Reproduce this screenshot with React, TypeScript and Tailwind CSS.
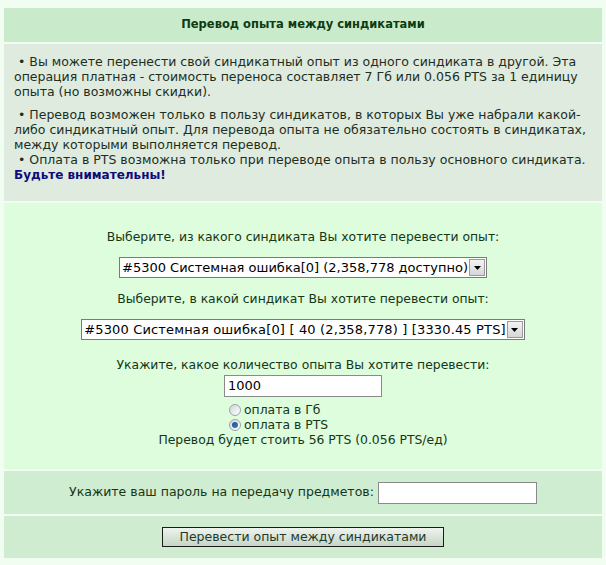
import React from "react";

const font = { fontFamily: "Verdana, 'DejaVu Sans', sans-serif" };

function Arrow() {
  return (
    <div className="flex h-[17px] w-[16px] items-center justify-center border border-[#9a9a9a] bg-gradient-to-b from-[#f4f4f4] to-[#d6d6d6]">
      <svg width="7" height="4" viewBox="0 0 7 4">
        <path d="M0 0h7L3.5 4z" fill="#000" />
      </svg>
    </div>
  );
}

function FakeSelect({ text, extra }: { text: string; extra?: string }) {
  return (
    <div className="flex h-[21px] items-center gap-[1px] border border-[#7a7a7a] bg-white pl-[2px] pr-[1px]">
      <span className={`whitespace-nowrap text-[13px] text-black ${extra ?? ""}`}>{text}</span>
      <Arrow />
    </div>
  );
}

function Radio({ checked }: { checked?: boolean }) {
  return (
    <span className="flex h-[12px] w-[12px] items-center justify-center rounded-full border border-[#9aa3ad] bg-gradient-to-br from-[#d2d6da] to-[#ffffff]">
      {checked && <span className="h-[6px] w-[6px] rounded-full bg-gradient-to-br from-[#1f4f8a] to-[#3d7cc4]" />}
    </span>
  );
}

export default function App() {
  return (
    <div className="min-h-[565px] w-[606px] bg-[#f0fdf0] pt-[8px]" style={font}>
      <div className="mx-[4px] flex w-[598px] flex-col gap-[2px]">
        {/* title */}
        <div className="flex h-[34px] items-center justify-center bg-[#c9ebcc] text-[11.5px] font-bold text-[#0f3b12]">
          Перевод опыта между синдикатами
        </div>

        {/* notes */}
        <div className="h-[157px] bg-[#dfebdf] px-[10px] pt-[10px] text-[12.5px] leading-[15px] text-[#1d2e1d]">
          <div className="whitespace-nowrap">
            &nbsp;• Вы можете перенести свой синдикатный опыт из одного синдиката в другой. Эта
            <br />
            операция платная - стоимость переноса составляет 7 Гб или 0.056 PTS за 1 единицу
            <br />
            опыта (но возможны скидки).
          </div>
          <div className="mt-[8px] whitespace-nowrap">
            &nbsp;• Перевод возможен только в пользу синдикатов, в которых Вы уже набрали какой-
            <br />
            либо синдикатный опыт. Для перевода опыта не обязательно состоять в синдикатах,
            <br />
            между которыми выполняется перевод.
            <br />
            &nbsp;• Оплата в PTS возможна только при переводе опыта в пользу основного синдиката.
            <br />
            <b className="text-[12px] text-[#0c0c7a]">Будьте внимательны!</b>
          </div>
        </div>

        {/* form */}
        <div className="flex h-[266px] flex-col items-center bg-[#ddfddd] pt-[26px] text-[12.4px] leading-[16px] text-[#163616]">
          <div>Выберите, из какого синдиката Вы хотите перевести опыт:</div>
          <div className="mt-[12px]">
            <FakeSelect text="#5300 Системная ошибка[0] (2,358,778 доступно)" />
          </div>
          <div className="mt-[13px]">Выберите, в какой синдикат Вы хотите перевести опыт:</div>
          <div className="mt-[12px]">
            <FakeSelect text="#5300 Системная ошибка[0] [ 40 (2,358,778) ] [3330.45 PTS]" extra="tracking-[0.15px]" />
          </div>
          <div className="mt-[17px]">Укажите, какое количество опыта Вы хотите перевести:</div>
          <div className="mt-[2px] flex h-[22px] w-[158px] items-center border border-[#8a8a8a] bg-white px-[3px] text-[13px] text-black">
            1000
          </div>
          <div className="mt-[5px] flex w-[158px] flex-col leading-[15px]">
            <div className="flex items-center gap-[3px] pl-[5px]">
              <Radio />
              <span>оплата в Гб</span>
            </div>
            <div className="flex items-center gap-[3px] pl-[5px]">
              <Radio checked />
              <span>оплата в PTS</span>
            </div>
          </div>
          <div className="leading-[15px]">Перевод будет стоить 56 PTS (0.056 PTS/ед)</div>
        </div>

        {/* password */}
        <div className="flex h-[43px] items-center justify-center gap-[4px] bg-[#cfedd0] text-[12.5px] text-[#163616]">
          <span>Укажите ваш пароль на передачу предметов:</span>
          <div className="h-[22px] w-[159px] border border-[#8a8a8a] bg-white" />
        </div>

        {/* submit */}
        <div className="flex h-[42px] items-center justify-center bg-[#d0ecd0]">
          <button className="h-[20px] w-[282px] border border-[#1b1b1b] bg-gradient-to-b from-[#eef3ee] to-[#c6d6c6] text-[12.5px] leading-[18px] text-[#1f3a2a]" style={font}>
            Перевести опыт между синдикатами
          </button>
        </div>
      </div>
    </div>
  );
}
